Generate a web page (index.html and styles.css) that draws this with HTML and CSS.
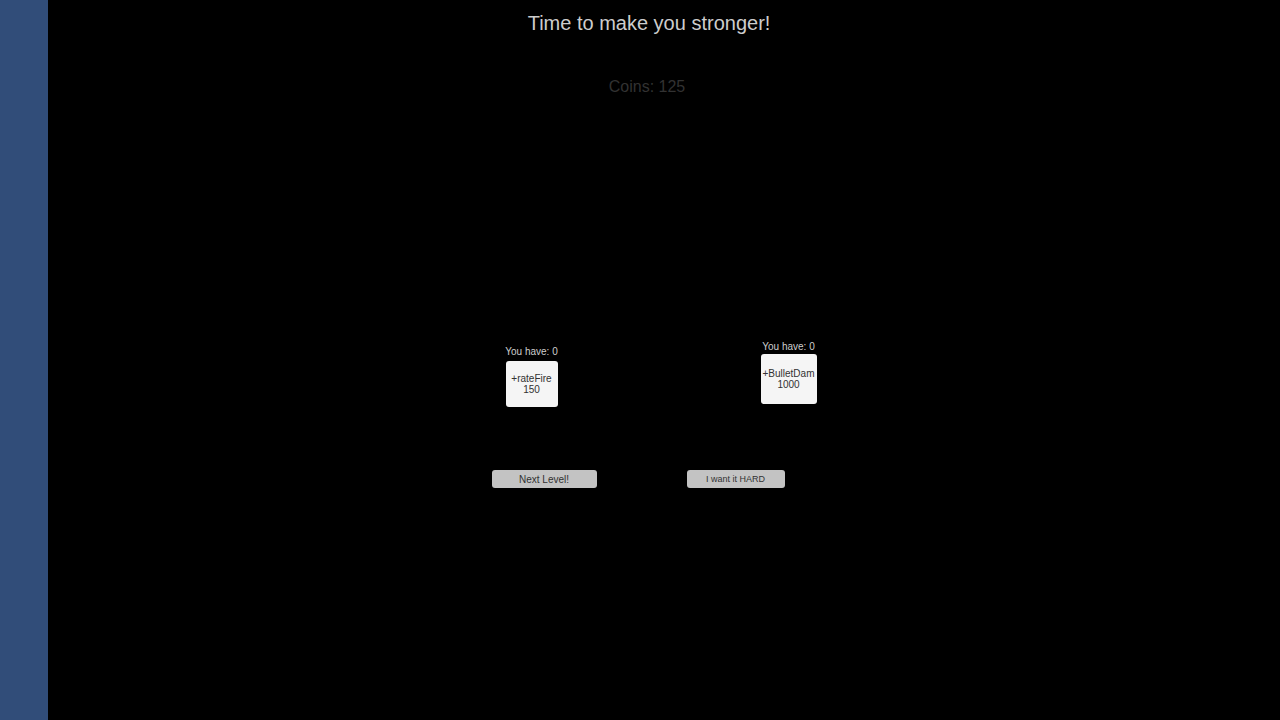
FILE: index.html
```html
<!DOCTYPE html>
<html lang="en">
<head>
  <meta charset="UTF-8">
  <meta name="viewport" content="width=device-width, initial-scale=1.0">
  <title>Upgrades</title>
  <link rel="stylesheet" href="styles.css">
</head>
<body>
  <main class="shop">
    <h1>Time to make you stronger!</h1>
    <p class="coins">Coins: 125</p>

    <div class="upgrades">
      <div class="upgrade fire">
        <p>You have: 0</p>
        <button type="button">+rateFire<br>150</button>
      </div>
      <div class="upgrade damage">
        <p>You have: 0</p>
        <button type="button">+BulletDam<br>1000</button>
      </div>
    </div>

    <div class="levels">
      <button type="button" class="next">Next Level!</button>
      <button type="button" class="hard">I want it HARD</button>
    </div>
  </main>
</body>
</html>
```

FILE: styles.css
```css
* {
  box-sizing: border-box;
}

body {
  margin: 0;
  min-height: 100vh;
  display: flex;
  background-color: #314d79;
  font-family: "Liberation Sans", Arial, sans-serif;
}

.shop {
  flex: 1;
  display: flex;
  flex-direction: column;
  align-items: center;
  margin-left: 48px;
  padding-top: 11px;
  padding-right: 30px;
  background-color: #000;
  color: #cdcdcd;
}

h1 {
  margin: 0;
  font-size: 20px;
  line-height: 24px;
  font-weight: normal;
}

.coins {
  margin: 42px 4px 0 0;
  font-size: 16px;
  line-height: 20px;
  color: #323232;
}

.upgrades {
  display: flex;
  align-items: flex-start;
  gap: 203px;
  margin-top: 244px;
  margin-left: 24px;
}

.upgrade {
  display: flex;
  flex-direction: column;
  align-items: center;
}

.upgrade p {
  margin: 0;
  font-size: 10px;
  line-height: 12px;
  white-space: nowrap;
}

button {
  border: none;
  border-radius: 3px;
  padding: 0;
  font-family: inherit;
  font-size: 10px;
  line-height: 11px;
  color: #323232;
  cursor: pointer;
}

.upgrade button {
  background-color: #f5f5f5;
}

.fire {
  width: 52px;
  padding-top: 5px;
  gap: 3px;
}

.fire button {
  width: 52px;
  height: 46px;
}

.damage {
  width: 56px;
  gap: 1px;
}

.damage button {
  width: 56px;
  height: 50px;
}

.levels {
  display: flex;
  gap: 90px;
  margin-top: 63px;
  margin-right: 22px;
}

.levels button {
  height: 18px;
  background-color: #c3c3c3;
}

.next {
  width: 105px;
}

.hard {
  width: 98px;
  font-size: 9px;
}
```
